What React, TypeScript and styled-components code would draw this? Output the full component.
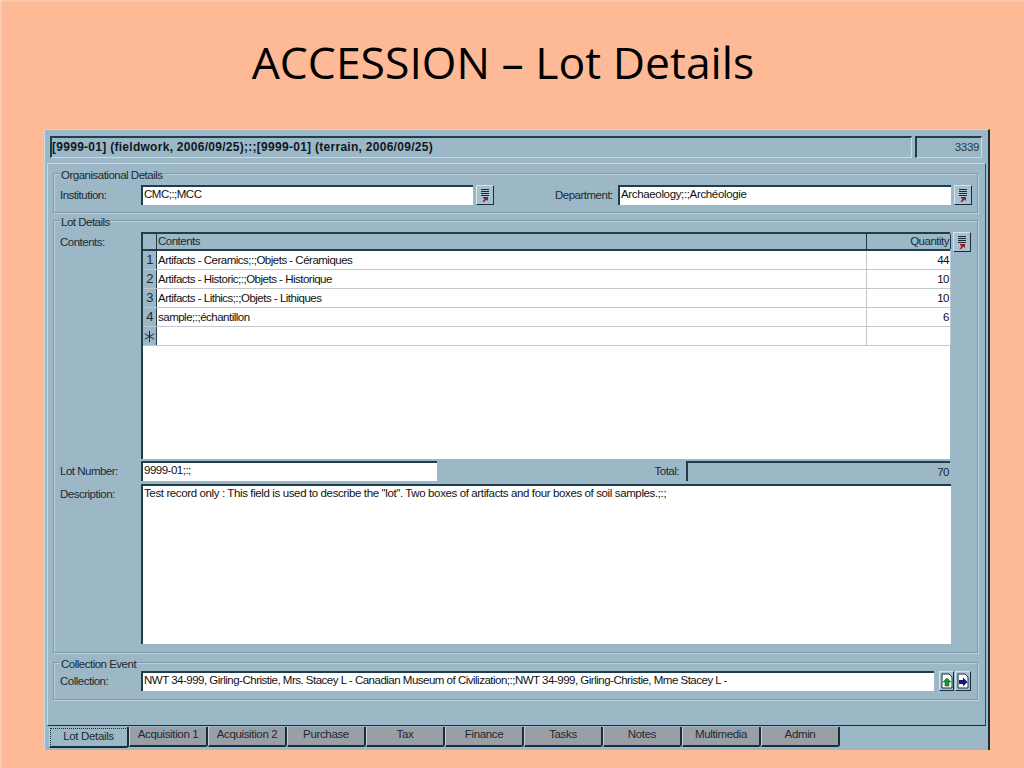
import React from "react";
import styled, { createGlobalStyle } from "styled-components";

const GlobalStyle = createGlobalStyle`
  html, body {
    margin: 0;
    padding: 0;
    background: #feb996;
  }
`;

const Slide = styled.div`
  width: 1024px;
  height: 768px;
  overflow: hidden;
  box-sizing: border-box;
  background:
    linear-gradient(180deg, #ffd0b8 0, rgba(255, 208, 184, 0) 2px),
    linear-gradient(90deg, #ffd0b8 0, #feb996 3px);
`;

const Title = styled.h1`
  margin: 0;
  height: 129px;
  box-sizing: border-box;
  padding: 34px 18px 0 0;
  text-align: center;
  font-family: "Open Sans", sans-serif;
  font-weight: 400;
  font-size: 44.5px;
  line-height: 56px;
  color: #000;
`;

const Window = styled.div`
  width: 946px;
  height: 621px;
  margin-left: 44px;
  box-sizing: border-box;
  padding: 6px 0 0 5px;
  background: #9cb7c6;
  border-top: 1px solid #c7d9e2;
  border-left: 1px solid #c7d9e2;
  border-right: 2px solid #14303f;
  font-family: "Liberation Sans", sans-serif;
  font-size: 11.5px;
  letter-spacing: -0.5px;
  color: #1c2a33;
`;

const StatusRow = styled.div`
  display: flex;
  gap: 3px;
  height: 22px;
`;

const StatusField = styled.div<{ $width: number; $right?: boolean; $bold?: boolean }>`
  width: ${({ $width }) => $width}px;
  box-sizing: border-box;
  padding: 0 ${({ $bold }) => ($bold ? 0 : 2)}px;
  line-height: 19px;
  border-top: 2px solid #1f3d4d;
  border-left: 2px solid #1f3d4d;
  border-bottom: 1px solid #c7d9e2;
  border-right: 1px solid #c7d9e2;
  text-align: ${({ $right }) => ($right ? "right" : "left")};
  font-weight: ${({ $bold }) => ($bold ? 700 : 400)};
  font-size: ${({ $bold }) => ($bold ? 12 : 11.5)}px;
  letter-spacing: ${({ $bold }) => ($bold ? 0.28 : -0.35)}px;
  color: ${({ $bold }) => ($bold ? "#0e1a22" : "#2a3a44")};
`;

const TabPanel = styled.div`
  width: 939px;
  height: 563px;
  margin: 5px 0 0 -3px;
  padding: 9px 0 0 5px;
  box-sizing: border-box;
  display: flex;
  flex-direction: column;
  background: #9cb7c6;
  border-top: 1px solid #c7d9e2;
  border-left: 1px solid #c7d9e2;
  border-right: 1px solid #2b4a5a;
  border-bottom: 1px solid #14303f;
`;

const Group = styled.div<{ $height: number; $top: number; $gap: number }>`
  position: relative;
  width: 925px;
  height: ${({ $height }) => $height}px;
  margin-top: ${({ $gap }) => $gap}px;
  padding: ${({ $top }) => $top}px 0 0 6px;
  box-sizing: border-box;
  border: 1px solid #7f9aaa;
  box-shadow: inset 1px 1px 0 #bcd0da, 1px 1px 0 #bcd0da;
`;

const Legend = styled.span`
  position: absolute;
  left: 6px;
  top: -5px;
  padding: 0 1px;
  background: #9cb7c6;
  line-height: 13px;
`;

const Row = styled.div<{ $gap?: number; $height?: number }>`
  display: flex;
  align-items: flex-start;
  margin-top: ${({ $gap }) => $gap ?? 0}px;
  height: ${({ $height }) => $height ?? 20}px;
`;

const FieldLabel = styled.label`
  width: 81px;
  flex: none;
  line-height: 20px;
`;

const Input = styled.div<{ $width: number; $height?: number; $tracking?: number }>`
  width: ${({ $width }) => $width}px;
  height: ${({ $height }) => $height ?? 20}px;
  flex: none;
  box-sizing: border-box;
  padding: 0 1px;
  background: #fff;
  border-top: 2px solid #1f3d4d;
  border-left: 2px solid #1f3d4d;
  line-height: 15px;
  letter-spacing: ${({ $tracking }) => $tracking ?? -0.5}px;
  color: #111;
  white-space: nowrap;
  overflow: hidden;
`;

const ToolButton = styled.button<{ $width?: number; $gap?: number }>`
  width: ${({ $width }) => $width ?? 18}px;
  height: 20px;
  flex: none;
  margin: 0 0 0 ${({ $gap }) => $gap ?? 3}px;
  padding: 0;
  display: flex;
  align-items: center;
  justify-content: center;
  background: #a9c1ce;
  border: 1px solid;
  border-color: #d5e3ea #14303f #14303f #d5e3ea;
`;

const DepartmentLabel = styled.label`
  width: 63px;
  margin-left: 61px;
  flex: none;
  line-height: 20px;
`;

const Grid = styled.div`
  width: 809px;
  height: 227px;
  flex: none;
  box-sizing: border-box;
  background: #fff;
  border-top: 2px solid #1f3d4d;
  border-left: 2px solid #1f3d4d;
`;

const GridRow = styled.div<{ $head?: boolean }>`
  display: grid;
  grid-template-columns: 14px 710px 84px;
  height: ${({ $head }) => ($head ? 17 : 19)}px;
  box-sizing: border-box;
  border-bottom: ${({ $head }) => ($head ? "2px solid #1f3d4d" : "1px solid #c2c8cc")};
  line-height: ${({ $head }) => ($head ? 15 : 18)}px;
`;

const RowHead = styled.div`
  display: flex;
  align-items: center;
  justify-content: center;
  background: #9cb7c6;
  border-right: 1px solid #1f3d4d;
  font-size: 13px;
  color: #1c2a33;
`;

const Cell = styled.div<{ $right?: boolean; $head?: boolean }>`
  padding: 0 1px 0 1px;
  background: ${({ $head }) => ($head ? "#9cb7c6" : "#fff")};
  border-right: 1px solid ${({ $head }) => ($head ? "#1f3d4d" : "#c2c8cc")};
  text-align: ${({ $right }) => ($right ? "right" : "left")};
  color: ${({ $head }) => ($head ? "#1c2a33" : "#111")};
  white-space: nowrap;
`;

const TotalLabel = styled.label`
  width: 242px;
  flex: none;
  box-sizing: border-box;
  text-align: right;
  line-height: 20px;
`;

const TotalField = styled.div`
  width: 264px;
  height: 20px;
  margin-left: 7px;
  flex: none;
  box-sizing: border-box;
  padding-right: 1px;
  text-align: right;
  line-height: 18px;
  border-top: 2px solid #1f3d4d;
  border-left: 2px solid #1f3d4d;
  background: #9cb7c6;
`;

const TabStrip = styled.div`
  display: flex;
  margin: 1px 0 0 -1px;
`;

const Tab = styled.div<{ $active?: boolean }>`
  width: ${({ $active }) => ($active ? 80 : 79)}px;
  height: ${({ $active }) => ($active ? 21 : 20)}px;
  box-sizing: border-box;
  text-align: center;
  line-height: ${({ $active }) => ($active ? 18 : 15)}px;
  letter-spacing: -0.35px;
  background: ${({ $active }) => ($active ? "#9cb7c6" : "#9a9fa5")};
  border-right: 2px solid #14303f;
  border-bottom: 2px solid #14303f;
  border-left: 1px solid #c7d0d6;
  border-radius: 0 0 3px 0;
  color: #1c2a33;
  outline: ${({ $active }) => ($active ? "1px dotted #14303f" : "none")};
  outline-offset: -2px;
`;

const ListIcon = () => (
  <svg width="10" height="14" viewBox="0 0 10 14">
    <path d="M1 1.5h8M1 3.5h8M1 5.5h8M1 7.5h8" stroke="#1c2a33" strokeWidth="1" />
    <path d="M3 9h5v4l-1.5-1.5L4 14H2.500L4.500 11 3 10z" fill="#8c1a2c" />
  </svg>
);

const PageIcon = ({ color, kind }: { color: string; kind: "up" | "right" }) => (
  <svg width="12" height="16" viewBox="0 0 12 16">
    <path d="M1 1h7l3 3v11H1z" fill="#fff" stroke="#14303f" />
    {kind === "up" ? (
      <path d="M6 5l4 4H8v4H4V9H2z" fill={color} stroke="#0b4f14" strokeWidth="0.500" />
    ) : (
      <path d="M2 7h4V4.500L10.500 9 6 13.500V11H2z" fill={color} />
    )}
  </svg>
);

const NewRowIcon = () => (
  <svg width="11" height="11" viewBox="0 0 11 11">
    <path d="M5.500 0v11M0.800 2.800l9.400 5.400M10.200 2.800L0.800 8.200" stroke="#1c2a33" strokeWidth="1" />
  </svg>
);

const rows = [
  { id: "1", name: "Artifacts - Ceramics;:;Objets - Céramiques", qty: "44" },
  { id: "2", name: "Artifacts - Historic;:;Objets - Historique", qty: "10" },
  { id: "3", name: "Artifacts - Lithics;:;Objets - Lithiques", qty: "10" },
  { id: "4", name: "sample;:;échantillon", qty: "6" },
];

const tabs = [
  "Lot Details",
  "Acquisition 1",
  "Acquisition 2",
  "Purchase",
  "Tax",
  "Finance",
  "Tasks",
  "Notes",
  "Multimedia",
  "Admin",
];

const App = (): JSX.Element => {
  return (
    <>
      <GlobalStyle />
      <Slide>
        <Title>ACCESSION – Lot Details</Title>
        <Window>
          <StatusRow>
            <StatusField $width={862} $bold>
              [9999-01] (fieldwork, 2006/09/25);:;[9999-01] (terrain, 2006/09/25)
            </StatusField>
            <StatusField $width={67} $right>
              3339
            </StatusField>
          </StatusRow>
          <TabPanel>
            <Group $height={40} $top={11} $gap={0}>
              <Legend>Organisational Details</Legend>
              <Row>
                <FieldLabel>Institution:</FieldLabel>
                <Input $width={332}>CMC;:;MCC</Input>
                <ToolButton>
                  <ListIcon />
                </ToolButton>
                <DepartmentLabel>Department:</DepartmentLabel>
                <Input $width={333} $tracking={-0.35}>Archaeology;:;Archéologie</Input>
                <ToolButton>
                  <ListIcon />
                </ToolButton>
              </Row>
            </Group>
            <Group $height={433} $top={11} $gap={7}>
              <Legend>Lot Details</Legend>
              <Row $height={227}>
                <FieldLabel>Contents:</FieldLabel>
                <Grid>
                  <GridRow $head>
                    <RowHead />
                    <Cell $head>Contents</Cell>
                    <Cell $head $right>
                      Quantity
                    </Cell>
                  </GridRow>
                  {rows.map((row) => (
                    <GridRow key={row.id}>
                      <RowHead>{row.id}</RowHead>
                      <Cell>{row.name}</Cell>
                      <Cell $right>{row.qty}</Cell>
                    </GridRow>
                  ))}
                  <GridRow>
                    <RowHead>
                      <NewRowIcon />
                    </RowHead>
                    <Cell />
                    <Cell $right />
                  </GridRow>
                </Grid>
                <ToolButton>
                  <ListIcon />
                </ToolButton>
              </Row>
              <Row $gap={2}>
                <FieldLabel>Lot Number:</FieldLabel>
                <Input $width={296}>9999-01;:;</Input>
                <TotalLabel>Total:</TotalLabel>
                <TotalField>70</TotalField>
              </Row>
              <Row $gap={3} $height={160}>
                <FieldLabel>Description:</FieldLabel>
                <Input $width={810} $height={160} $tracking={-0.38}>
                  Test record only : This field is used to describe the "lot". Two boxes of artifacts and four boxes of soil samples.;:;
                </Input>
              </Row>
            </Group>
            <Group $height={38} $top={8} $gap={9}>
              <Legend>Collection Event</Legend>
              <Row>
                <FieldLabel>Collection:</FieldLabel>
                <Input $width={793}>
                  NWT 34-999, Girling-Christie, Mrs. Stacey L - Canadian Museum of Civilization;:;NWT 34-999, Girling-Christie, Mme Stacey L -
                </Input>
                <ToolButton $width={15} $gap={5}>
                  <PageIcon color="#0f9a2c" kind="up" />
                </ToolButton>
                <ToolButton $width={16} $gap={1}>
                  <PageIcon color="#14147a" kind="right" />
                </ToolButton>
              </Row>
            </Group>
          </TabPanel>
          <TabStrip>
            {tabs.map((tab, i) => (
              <Tab key={tab} $active={i === 0}>
                {tab}
              </Tab>
            ))}
          </TabStrip>
        </Window>
      </Slide>
    </>
  );
};

export default App;
